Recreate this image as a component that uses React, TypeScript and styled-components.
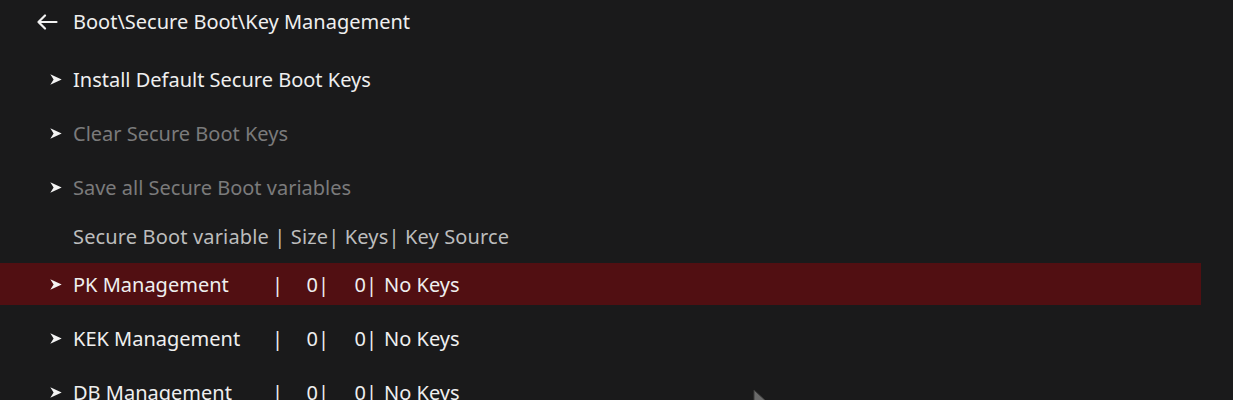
import React from 'react';
import styled, { createGlobalStyle } from 'styled-components';

type Entry = {
  label: string;
  size?: string;
  keys?: string;
  source?: string;
  disabled?: boolean;
  selected?: boolean;
};

const actions: Entry[] = [
  { label: 'Install Default Secure Boot Keys' },
  { label: 'Clear Secure Boot Keys', disabled: true },
  { label: 'Save all Secure Boot variables', disabled: true },
];

const variables: Entry[] = [
  { label: 'PK Management', size: '0', keys: '0', source: 'No Keys', selected: true },
  { label: 'KEK Management', size: '0', keys: '0', source: 'No Keys' },
  { label: 'DB Management', size: '0', keys: '0', source: 'No Keys' },
];

const GlobalStyle = createGlobalStyle`
  html, body {
    margin: 0;
    padding: 0;
    background: #1a1a1a;
  }
`;

const Page = styled.div`
  position: relative;
  width: 1233px;
  height: 400px;
  overflow: hidden;
  background: #1a1a1b;
  font-family: 'Noto Sans', 'Open Sans', sans-serif;
  font-size: 20px;
  color: #efefef;
`;

const TitleBar = styled.div`
  display: flex;
  align-items: center;
  height: 42px;
  padding-left: 36px;
  margin-bottom: 16px;
`;

const BackIcon = styled.svg`
  width: 22px;
  height: 16px;
  margin-right: 15px;
  margin-top: 1px;
`;

const List = styled.div`
  display: flex;
  flex-direction: column;
`;

const Row = styled.div<{ $selected?: boolean; $disabled?: boolean }>`
  display: flex;
  align-items: center;
  height: 42px;
  width: 1201px;
  margin-bottom: 12px;
  padding-left: 50px;
  box-sizing: border-box;
  background: ${(p) => (p.$selected ? '#510f12' : 'transparent')};
  color: ${(p) => (p.$disabled ? '#7b7b7b' : '#efefef')};
`;

const ColumnHeader = styled.div`
  display: flex;
  align-items: center;
  height: 30px;
  margin-bottom: 12px;
  padding-left: 73px;
  padding-top: 1px;
  color: #bdbdbd;
  letter-spacing: 0.15px;
  white-space: pre;
`;

const Chevron = styled.svg`
  width: 12px;
  height: 11px;
  margin-right: 11px;
  flex-shrink: 0;
`;

const Cells = styled.div`
  display: grid;
  grid-template-columns: 199px 8px 49px 48px 1fr;
  align-items: center;
  white-space: pre;
`;

const Num = styled.span`
  text-align: right;
`;

const Source = styled.span`
  padding-left: 7px;
`;

const Pointer = styled.svg`
  position: absolute;
  left: 753px;
  top: 389px;
  width: 16px;
  height: 22px;
`;

const ChevronIcon = () => (
  <Chevron viewBox="0 0 12 11">
    <path d="M0.3 0.3 L11.7 5.5 L0.3 10.7 L3.6 5.5 Z" fill="#f4f4f4" />
  </Chevron>
);

const App = () => {
  return (
    <>
      <GlobalStyle />
      <Page>
        <TitleBar>
          <BackIcon viewBox="0 0 22 16">
            <path
              d="M20.5 8 H2.5 M9 1.5 L2.5 8 L9 14.5"
              stroke="#f2f2f2"
              strokeWidth="2.2"
              fill="none"
              strokeLinecap="round"
              strokeLinejoin="round"
            />
          </BackIcon>
          <span>Boot\Secure Boot\Key Management</span>
        </TitleBar>
        <List>
          {actions.map((a) => (
            <Row key={a.label} $disabled={a.disabled}>
              <ChevronIcon />
              <span>{a.label}</span>
            </Row>
          ))}
          <ColumnHeader>Secure Boot variable | Size| Keys| Key Source</ColumnHeader>
          {variables.map((v) => (
            <Row key={v.label} $selected={v.selected}>
              <ChevronIcon />
              <Cells>
                <span>{v.label}</span>
                <span>|</span>
                <Num>{v.size}|</Num>
                <Num>{v.keys}|</Num>
                <Source>{v.source}</Source>
              </Cells>
            </Row>
          ))}
        </List>
        <Pointer viewBox="0 0 16 22">
          <path d="M1 1 L1 18 L5 14 L8 21 L11 20 L8 13 L14 13 Z" fill="#6a6a6a" stroke="#3a3a3a" strokeWidth="1" />
        </Pointer>
      </Page>
    </>
  );
};

export default App;
